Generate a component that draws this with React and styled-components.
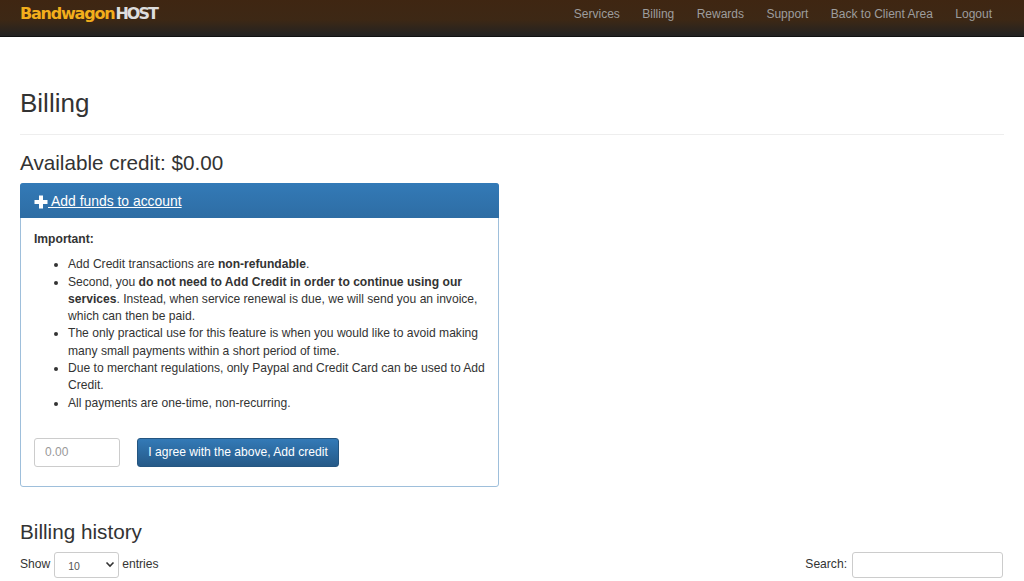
import React from 'react'
import styled, { createGlobalStyle } from 'styled-components'

const Global = createGlobalStyle`
  html, body {
    margin: 0;
    background: #fff;
  }
  body {
    font-family: "Liberation Sans", Arial, sans-serif;
    font-size: 12.1px;
    line-height: 17.3px;
    color: #333;
  }
  * {
    box-sizing: border-box;
  }
`

const Page = styled.div`
  height: 581px;
  overflow: hidden;
`

const Navbar = styled.div`
  display: flex;
  align-items: center;
  justify-content: space-between;
  height: 37px;
  padding: 0 32px 9px 20px;
  background: linear-gradient(to bottom, #3f2612 0%, #3d2815 55%, #222 100%);
  border-bottom: 1px solid #111;
`

const Logo = styled.div`
  font-family: "DejaVu Sans", sans-serif;
  font-size: 16px;
  font-weight: 700;
  letter-spacing: -1.2px;
  line-height: 20px;
  color: #ddd;
  margin-top: 1px;
`

const LogoAccent = styled.span`
  color: #f2ae1c;
  margin-right: 1px;
`

const LogoHost = styled.span`
  letter-spacing: -2px;
`

const NavLinks = styled.div`
  display: flex;
  gap: 22.4px;
  margin-top: 3px;
`

const NavLink = styled.a`
  color: #9d9d9d;
  font-size: 12px;
`

const Content = styled.div`
  padding: 0 20px;
`

const PageHeader = styled.div`
  margin-top: 50px;
  padding-bottom: 15px;
  border-bottom: 1px solid #eee;
`

const Title = styled.h1`
  margin: 0;
  font-size: 26px;
  font-weight: 400;
  line-height: 32px;
`

const Subtitle = styled.h3`
  margin: ${p => p.$top}px 0 ${p => p.$bottom}px;
  font-size: 20.7px;
  font-weight: 400;
  line-height: 24px;
`

const Panel = styled.div`
  width: 479px;
  height: 304px;
  border: 1px solid #9ebfdb;
  border-radius: 3px;
`

const PanelHead = styled.div`
  height: 35px;
  margin: -1px -1px 0;
  padding: 2px 14px 0;
  display: flex;
  align-items: center;
  color: #fff;
  font-size: 13.9px;
  border-radius: 3px 3px 0 0;
  background: linear-gradient(to bottom, #337ab7, #2e6da4);
`

const HeadLink = styled.span`
  text-decoration: underline;
  white-space: pre;
`

const PanelBody = styled.div`
  padding: 13px 13px 0;
`

const Important = styled.div`
  font-weight: 700;
  margin-bottom: 8px;
`

const Notes = styled.ul`
  margin: 0;
  padding-left: 34px;
`

const FundsForm = styled.div`
  display: flex;
  gap: 17px;
  margin-top: 26px;
`

const AmountInput = styled.input`
  width: 86px;
  height: 29px;
  padding: 0 10px;
  font: 12px "Liberation Sans", Arial, sans-serif;
  color: #555;
  border: 1px solid #ccc;
  border-radius: 3px;
  &::placeholder {
    color: #999;
  }
`

const AgreeButton = styled.button`
  height: 29px;
  width: 202px;
  padding: 0;
  font: 12.1px "Liberation Sans", Arial, sans-serif;
  color: #fff;
  border: 1px solid #245580;
  border-radius: 3px;
  background: linear-gradient(to bottom, #337ab7, #265a88);
`

const TableControls = styled.div`
  display: flex;
  justify-content: space-between;
  align-items: center;
`

const Label = styled.label`
  display: flex;
  align-items: center;
  gap: 3px;
`

const Select = styled.div`
  position: relative;
  width: 65px;
  height: 26px;
  margin: 1px 0 0 1px;
  padding: 4px 13px;
  font-size: 10.5px;
  color: #555;
  border: 1px solid #ccc;
  border-radius: 3px;
  line-height: 18px;
`

const Caret = styled.svg`
  position: absolute;
  right: 3px;
  top: 8px;
`

const SearchInput = styled.input`
  width: 151px;
  height: 26px;
  margin: 1px 1px 0 2px;
  border: 1px solid #ccc;
  border-radius: 3px;
`

const App = () => (
  <Page>
    <Global />
    <Navbar>
      <Logo>
        <LogoAccent>Bandwagon</LogoAccent><LogoHost>HOST</LogoHost>
      </Logo>
      <NavLinks>
        {['Services', 'Billing', 'Rewards', 'Support', 'Back to Client Area', 'Logout'].map(t => (
          <NavLink key={t}>{t}</NavLink>
        ))}
      </NavLinks>
    </Navbar>
    <Content>
      <PageHeader>
        <Title>Billing</Title>
      </PageHeader>
      <Subtitle $top={16} $bottom={8}>Available credit: $0.00</Subtitle>
      <Panel>
        <PanelHead>
          <svg width="14" height="14" viewBox="0 0 14 14" fill="#fff">
            <path d="M5 .5h4V5h4.500v4H9v4.500H5V9H.5V5H5z" />
          </svg>
          <HeadLink> Add funds to account</HeadLink>
        </PanelHead>
        <PanelBody>
          <Important>Important:</Important>
          <Notes>
            <li>Add Credit transactions are <b>non-refundable</b>.</li>
            <li>
              Second, you <b>do not need to Add Credit in order to continue using our services</b>.
              {' '}Instead, when service renewal is due, we will send you an invoice, which can then be paid.
            </li>
            <li>The only practical use for this feature is when you would like to avoid making many small payments within a short period of time.</li>
            <li>Due to merchant regulations, only Paypal and Credit Card can be used to Add Credit.</li>
            <li>All payments are one-time, non-recurring.</li>
          </Notes>
          <FundsForm>
            <AmountInput placeholder="0.00" />
            <AgreeButton>I agree with the above, Add credit</AgreeButton>
          </FundsForm>
        </PanelBody>
      </Panel>
      <Subtitle $top={33} $bottom={7}>Billing history</Subtitle>
      <TableControls>
        <Label>
          Show
          <Select>
            10
            <Caret width="10" height="8" viewBox="0 0 10 8" fill="none" stroke="#333" strokeWidth="1.6">
              <path d="M1.500 1.500L5 5l3.500-3.500" />
            </Caret>
          </Select>
          entries
        </Label>
        <Label>
          Search:
          <SearchInput />
        </Label>
      </TableControls>
    </Content>
  </Page>
)

export default App
